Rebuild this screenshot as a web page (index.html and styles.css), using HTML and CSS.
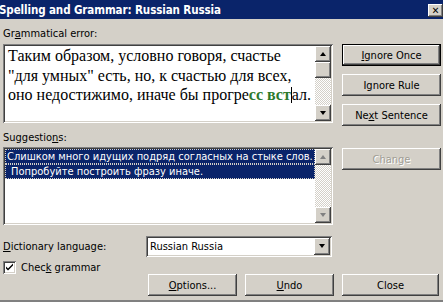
FILE: index.html
```html
<!DOCTYPE html>
<html lang="ru">
<head>
  <meta charset="UTF-8">
  <title>Spelling and Grammar: Russian Russia</title>
  <link rel="stylesheet" href="styles.css">
</head>
<body>
  <div class="dialog">
    <div class="titlebar">
      <span class="title">Spelling and Grammar: Russian Russia</span>
      <span class="closebox">&#x2715;</span>
    </div>

    <div class="content">
      <div class="label top">Gr<u>a</u>mmatical error:</div>
      <div class="row">
        <div class="field errorbox">
          <div class="errortext">Таким образом, условно говоря, счастье<br>"для умных" есть, но, к счастью для всех,<br>оно недостижимо, иначе бы прогре<b class="bad">сс вст</b><span class="caret"></span>ал.</div>
          <div class="vscroll">
            <span class="arrow up"></span>
            <span class="thumb"></span>
            <span class="track"></span>
            <span class="arrow down"></span>
          </div>
        </div>
        <div class="sidebtns">
          <button class="btn default"><u>I</u>gnore Once</button>
          <button class="btn">I<u>g</u>nore Rule</button>
          <button class="btn">Ne<u>x</u>t Sentence</button>
        </div>
      </div>

      <div class="label">Suggestio<u>n</u>s:</div>
      <div class="row">
        <div class="field listbox">
          <div class="items">
            <div class="item sel">Слишком много идущих подряд согласных на стыке слов.</div>
            <div class="item sel">Попробуйте построить фразу иначе.</div>
          </div>
          <div class="vscroll off">
            <span class="arrow up"></span>
            <span class="track"></span>
            <span class="arrow down"></span>
          </div>
        </div>
        <div class="sidebtns change">
          <button class="btn disabled">Change</button>
        </div>
      </div>

      <div class="dictrow">
        <span class="label"><u>D</u>ictionary language:</span>
        <div class="field select">
          <span class="value">Russian Russia</span>
          <span class="arrow down"></span>
        </div>
      </div>

      <div class="checkrow">
        <span class="checkbox">
          <svg width="9" height="9" viewBox="0 0 9 9"><path d="M1 3.5 L3 5.5 L8 0.5 L8 2.5 L3 7.5 L1 5.5 Z" fill="#000"/></svg>
        </span>
        <span>Chec<u>k</u> grammar</span>
      </div>

      <div class="bottombtns">
        <button class="btn"><u>O</u>ptions...</button>
        <button class="btn"><u>U</u>ndo</button>
        <button class="btn">Close</button>
      </div>
    </div>
  </div>
</body>
</html>
```

FILE: styles.css
```css
body { margin: 0; background: #d4d0c8; font-family: "DejaVu Sans Condensed", "DejaVu Sans", sans-serif; font-size: 11px; color: #000; }
u { text-decoration: underline; text-underline-offset: 1px; }

.dialog { width: 443px; height: 302px; overflow: hidden; border-bottom: 2px solid #808080; box-sizing: border-box; }

.titlebar { height: 19px; background: #0a246a; display: flex; align-items: center; justify-content: space-between; }
.title { color: #fff; font-weight: bold; font-size: 11.5px; margin-left: -1px; letter-spacing: -0.1px; }
.closebox { width: 15px; height: 13px; margin-top: 1px; background: #d4d0c8; font-size: 10px; font-weight: bold; line-height: 13px; text-align: center; box-shadow: inset -1px -1px #404040, inset 1px 1px #fff, inset -2px -2px #808080; }

.content { padding: 0 3px; }
.label { line-height: 13px; }
.content > .label { margin-top: 5px; margin-bottom: 3px; }
.content > .label.top { margin-top: 8px; margin-bottom: 4px; }

.row { display: flex; gap: 9px; align-items: flex-start; }

.field { background: #fff; box-shadow: inset 1px 1px #808080, inset -1px -1px #fff, inset 2px 2px #404040, inset -2px -2px #d4d0c8; box-sizing: border-box; flex: none; }

.errorbox { width: 330px; height: 79px; display: flex; padding: 2px; }
.errortext { flex: 1; min-width: 0; font-family: "Liberation Serif", serif; font-size: 16px; line-height: 19.5px; padding: 0 0 0 3px; white-space: nowrap; overflow: hidden; }
.bad { color: #2d7a2d; }
.caret { display: inline-block; width: 1px; height: 16px; background: #000; vertical-align: -3px; }

.vscroll { width: 16px; display: flex; flex-direction: column; flex: none; }
.vscroll .track { flex: 1; background: repeating-conic-gradient(#d4d0c8 0 25%, #fff 0 50%) 0 0 / 2px 2px; }
.thumb { height: 16px; background: #d4d0c8; box-shadow: inset -1px -1px #404040, inset 1px 1px #fff, inset -2px -2px #808080; }

.arrow { width: 16px; height: 16px; background: #d4d0c8; box-shadow: inset -1px -1px #404040, inset 1px 1px #fff, inset -2px -2px #808080; position: relative; flex: none; }
.arrow::after { content: ""; position: absolute; left: 5px; width: 0; height: 0; border-left: 3.5px solid transparent; border-right: 3.5px solid transparent; }
.arrow.up::after { top: 6px; border-bottom: 4px solid #000; }
.arrow.down::after { top: 6px; border-top: 4px solid #000; }
.vscroll.off .arrow.up::after { border-bottom-color: #808080; }
.vscroll.off .arrow.down::after { border-top-color: #808080; }

.sidebtns { display: flex; flex-direction: column; gap: 8px; }
.sidebtns.change { padding-top: 1px; }

.btn { font: inherit; width: 99px; height: 22px; padding: 0; background: #d4d0c8; border: none; color: #000; box-shadow: inset -1px -1px #404040, inset 1px 1px #fff, inset -2px -2px #808080, inset 2px 2px #d4d0c8; }
.btn.default { box-shadow: inset 0 0 0 1px #000, inset -2px -2px #404040, inset 2px 2px #fff, inset -3px -3px #808080; }
.btn.disabled { color: #a09d95; text-shadow: 1px 1px #fff; }

.listbox { width: 330px; height: 78px; display: flex; padding: 2px; }
.items { flex: 1; min-width: 0; overflow: hidden; }
.item { height: 15px; line-height: 15px; white-space: nowrap; padding-left: 2px; }
.item.sel { background: #0a246a; color: #fff; outline: 1px dotted #d4d0c8; outline-offset: -1px; }
.item + .item { padding-left: 6px; }

.dictrow { display: flex; align-items: center; margin-top: 11px; height: 21px; }
.dictrow .label { width: 143px; }
.select { width: 186px; height: 21px; display: flex; align-items: center; padding: 2px; }
.select .value { flex: 1; padding-left: 2px; }
.select .arrow { height: 17px; }

.checkrow { display: flex; align-items: center; gap: 5px; margin-top: 4px; height: 13px; }
.checkbox { width: 13px; height: 13px; box-sizing: border-box; background: #fff; box-shadow: inset 1px 1px #808080, inset -1px -1px #fff, inset 2px 2px #404040, inset -2px -2px #d4d0c8; display: flex; align-items: center; justify-content: center; }

.bottombtns { display: flex; gap: 8px; margin-left: 145px; }
.bottombtns .btn { width: 89px; }
.bottombtns .btn:last-child { width: 97px; }
```
